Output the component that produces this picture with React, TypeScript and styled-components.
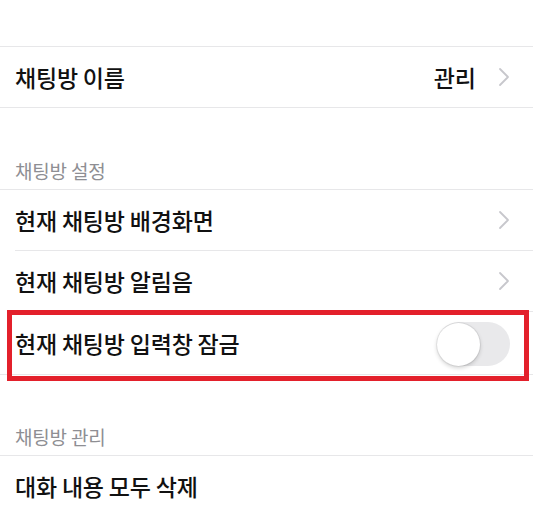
import React from 'react';
import styled, { createGlobalStyle } from 'styled-components';

const GlobalStyle = createGlobalStyle`
  html, body {
    margin: 0;
    padding: 0;
    background: #ffffff;
  }
  body {
    font-family: "Noto Sans CJK KR", "Noto Sans", sans-serif;
    color: #111111;
  }
`;

const Page = styled.div`
  display: flex;
  flex-direction: column;
  width: 533px;
  height: 513px;
  overflow: hidden;
  background: #ffffff;
`;

const TopSpace = styled.div`
  height: 46px;
  flex-shrink: 0;
`;

const Section = styled.div`
  border-top: 1px solid #e7e7e9;
  border-bottom: 1px solid #e7e7e9;
  flex-shrink: 0;
`;

const SectionHeader = styled.div<{ $height: number }>`
  height: ${p => p.$height}px;
  display: flex;
  align-items: flex-end;
  padding: 0 15px 6px;
  box-sizing: border-box;
  font-size: 19px;
  line-height: 24px;
  color: #8e8e93;
  letter-spacing: -0.2px;
  flex-shrink: 0;
`;

const Row = styled.div`
  position: relative;
  padding-left: 15px;
`;

const RowBody = styled.div<{ $divided?: boolean; $tall?: boolean }>`
  height: ${p => (p.$tall ? 62 : 60)}px;
  display: flex;
  align-items: center;
  justify-content: space-between;
  padding-right: 23px;
  border-top: ${p => (p.$divided ? '1px solid #e7e7e9' : 'none')};
`;

const Label = styled.span`
  font-size: 23px;
  font-weight: 500;
  color: #111111;
  letter-spacing: -0.2px;
`;

const Trailing = styled.div`
  display: flex;
  align-items: center;
  gap: 22px;
`;

const Value = styled.span`
  font-size: 23px;
  font-weight: 500;
  color: #111111;
`;

const Switch = styled.div`
  width: 73px;
  height: 44px;
  border-radius: 22px;
  background: #e9e9eb;
  display: flex;
  align-items: center;
  margin-top: 2px;
`;

const Knob = styled.div`
  width: 43px;
  height: 43px;
  border-radius: 50%;
  background: #ffffff;
  box-shadow: 0 0 0 1px rgba(0, 0, 0, 0.06), 0 2px 4px rgba(0, 0, 0, 0.18);
`;

const Highlight = styled.div`
  position: absolute;
  top: -1px;
  left: 7px;
  right: 4px;
  bottom: -7px;
  border: 5px solid #e3202b;
  pointer-events: none;
`;

const Chevron = () => (
  <svg width="12" height="20" viewBox="0 0 12 20" fill="none">
    <path d="M2 2 L10 10 L2 18" stroke="#c7c7cc" strokeWidth="1.8" strokeLinecap="round" strokeLinejoin="round" />
  </svg>
);

export default function App() {
  return (
    <>
      <GlobalStyle />
      <Page>
        <TopSpace />
        <Section>
          <Row>
            <RowBody>
              <Label>채팅방 이름</Label>
              <Trailing>
                <Value>관리</Value>
                <Chevron />
              </Trailing>
            </RowBody>
          </Row>
        </Section>

        <SectionHeader $height={81}>채팅방 설정</SectionHeader>
        <Section>
          <Row>
            <RowBody>
              <Label>현재 채팅방 배경화면</Label>
              <Chevron />
            </RowBody>
          </Row>
          <Row>
            <RowBody $divided>
              <Label>현재 채팅방 알림음</Label>
              <Chevron />
            </RowBody>
          </Row>
          <Row>
            <RowBody $divided $tall>
              <Label>현재 채팅방 입력창 잠금</Label>
              <Switch>
                <Knob />
              </Switch>
            </RowBody>
            <Highlight />
          </Row>
        </Section>

        <SectionHeader $height={80}>채팅방 관리</SectionHeader>
        <Section>
          <Row>
            <RowBody>
              <Label>대화 내용 모두 삭제</Label>
            </RowBody>
          </Row>
        </Section>
      </Page>
    </>
  );
}
